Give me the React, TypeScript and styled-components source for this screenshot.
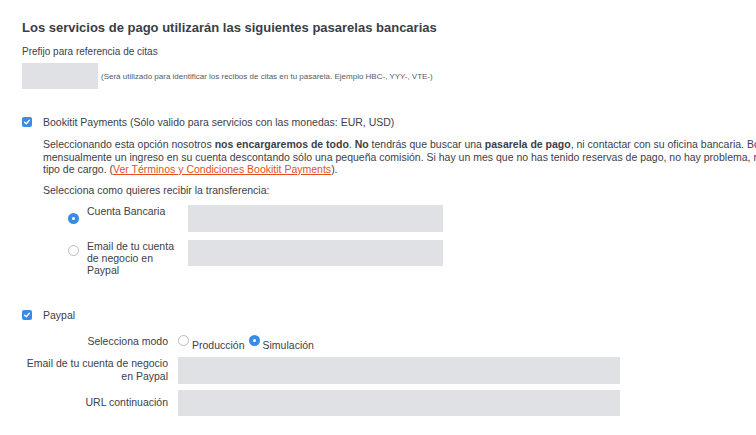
import React from "react";
import styled, { createGlobalStyle } from "styled-components";

const Global = createGlobalStyle`
  html, body { margin: 0; padding: 0; background: #fff; overflow: hidden; }
  body { font-family: "Liberation Sans", Arial, Helvetica, sans-serif; color: #3d4049; }
`;

const Page = styled.div`
  width: 1000px;
  padding: 19px 0 0 22px;
  font-size: 10.5px;
`;

const Heading = styled.h2`
  margin: 0;
  font-size: 13px;
  font-weight: bold;
  color: #3a3e47;
  line-height: 18px;
`;

const FieldLabel = styled.div`
  margin-top: 8px;
  font-size: 10px;
  line-height: 14px;
`;

const PrefixRow = styled.div`
  display: flex;
  align-items: center;
  margin-top: 4px;
  gap: 3px;
`;

const Input = styled.div<{ $w: number; $h?: number }>`
  width: ${(p) => p.$w}px;
  height: ${(p) => p.$h ?? 27}px;
  background: #dfe1e4;
  flex-shrink: 0;
`;

const Hint = styled.span`
  font-size: 8px;
  color: #555a63;
`;

const CheckRow = styled.div<{ $mt: number }>`
  display: flex;
  align-items: center;
  gap: 11px;
  margin-top: ${(p) => p.$mt}px;
  line-height: 14px;
`;

const Box = styled.span`
  width: 10px;
  height: 10px;
  border-radius: 2px;
  background: #3a8be8;
  display: inline-flex;
  align-items: center;
  justify-content: center;
  flex-shrink: 0;
`;

const Indented = styled.div`
  margin-left: 21px;
`;

const Para = styled.p`
  margin: 9px 0 0;
  line-height: 12.5px;
  white-space: nowrap;
`;

const Link = styled.a`
  color: #e2501f;
  text-decoration: underline;
`;

const Sub = styled.div`
  margin-top: 7px;
  line-height: 14px;
`;

const RadioGrid = styled.div`
  display: grid;
  grid-template-columns: 11px 93px 255px;
  column-gap: 8px;
  row-gap: 8px;
  margin: 8px 0 0 25px;
  align-items: start;
`;

const RadioCell = styled.div`
  margin-top: 5px;
  height: 11px;
`;

const RadioLabel = styled.div`
  line-height: 12px;
`;

const OnRadio = styled.span`
  display: inline-flex;
  align-items: center;
  justify-content: center;
  width: 11px;
  height: 11px;
  border-radius: 50%;
  background: #3a8be8;
  flex-shrink: 0;
  &::after {
    content: "";
    width: 3px;
    height: 3px;
    border-radius: 50%;
    background: #fff;
  }
`;

const OffRadio = styled.span`
  display: inline-block;
  box-sizing: border-box;
  width: 11px;
  height: 11px;
  border-radius: 50%;
  border: 1px solid #b9bcc2;
  background: #fff;
  flex-shrink: 0;
`;

const FormGrid = styled.div`
  display: grid;
  grid-template-columns: 146px 442px;
  column-gap: 10px;
  row-gap: 6px;
  margin-top: 11px;
  align-items: center;
`;

const FormLabel = styled.div`
  text-align: right;
  line-height: 13px;
  white-space: nowrap;
`;

const ModeOptions = styled.div`
  display: flex;
  align-items: center;
  gap: 3px;
  height: 16px;
  margin-bottom: 2px;
`;

const ModeText = styled.span`
  margin-top: 9px;
  margin-right: 1px;
`;

function Check() {
  return (
    <Box>
      <svg width="8" height="8" viewBox="0 0 8 8">
        <path d="M1.6 4.2 L3.3 5.8 L6.4 2.2" fill="none" stroke="#fff" strokeWidth="1.4" strokeLinecap="round" strokeLinejoin="round" />
      </svg>
    </Box>
  );
}

export default function App() {
  return (
    <>
      <Global />
      <Page>
        <Heading>Los servicios de pago utilizarán las siguientes pasarelas bancarias</Heading>
        <FieldLabel>Prefijo para referencia de citas</FieldLabel>
        <PrefixRow>
          <Input $w={76} $h={26} />
          <Hint>(Será utilizado para identificar los recibos de citas en tu pasarela. Ejemplo HBC-, YYY-, VTE-)</Hint>
        </PrefixRow>

        <CheckRow $mt={26}>
          <Check />
          <span>Bookitit Payments (Sólo valido para servicios con las monedas: EUR, USD)</span>
        </CheckRow>
        <Indented>
          <Para>
            Seleccionando esta opción nosotros <b>nos encargaremos de todo</b>. <b>No</b> tendrás que buscar una <b>pasarela de pago</b>, ni contactar con su oficina bancaria. Bookitit te hará
            <br />
            mensualmente un ingreso en su cuenta descontando sólo una pequeña comisión. Si hay un mes que no has tenido reservas de pago, no hay problema, no se te aplicará ningún
            <br />
            tipo de cargo. (<Link href="#">Ver Términos y Condiciones Bookitit Payments</Link>).
          </Para>
          <Sub>Selecciona como quieres recibir la transferencia:</Sub>
          <RadioGrid>
            <RadioCell>
              <OnRadio />
            </RadioCell>
            <RadioLabel>Cuenta Bancaria</RadioLabel>
            <Input $w={255} $h={27} />
            <RadioCell>
              <OffRadio />
            </RadioCell>
            <RadioLabel>
              Email de tu cuenta
              <br />
              de negocio en
              <br />
              Paypal
            </RadioLabel>
            <Input $w={255} $h={26} />
          </RadioGrid>
        </Indented>

        <CheckRow $mt={32}>
          <Check />
          <span>Paypal</span>
        </CheckRow>
        <FormGrid>
          <FormLabel>Selecciona modo</FormLabel>
          <ModeOptions>
            <OffRadio />
            <ModeText>Producción</ModeText>
            <OnRadio />
            <ModeText>Simulación</ModeText>
          </ModeOptions>
          <FormLabel>
            Email de tu cuenta de negocio
            <br />
            en Paypal
          </FormLabel>
          <Input $w={442} $h={27} />
          <FormLabel>URL continuación</FormLabel>
          <Input $w={442} $h={26} />
        </FormGrid>
      </Page>
    </>
  );
}
